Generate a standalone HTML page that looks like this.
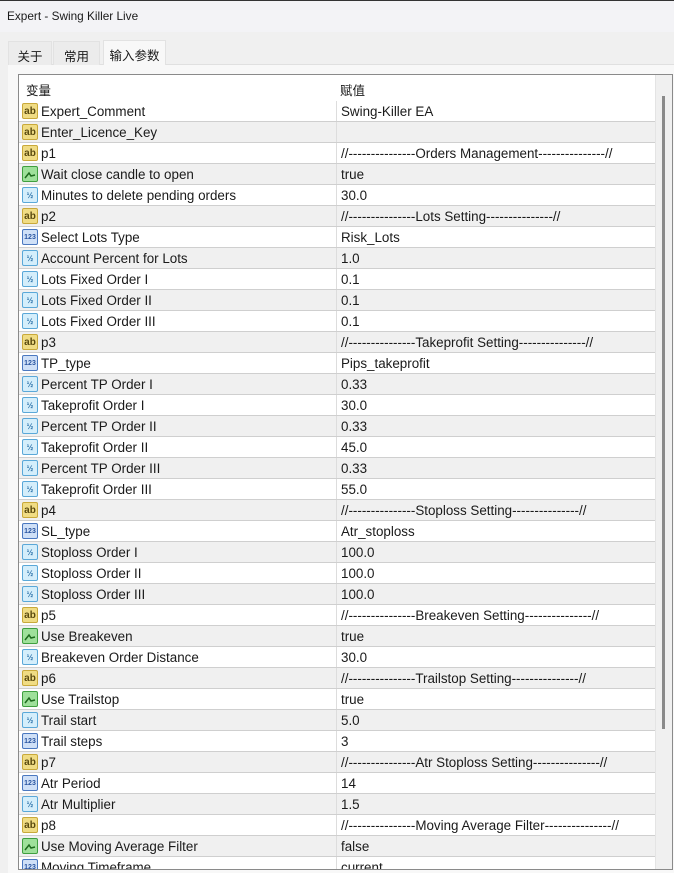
<!DOCTYPE html>
<html><head><meta charset="utf-8"><style>
*{margin:0;padding:0;box-sizing:border-box}
body{width:674px;height:873px;overflow:hidden;background:#f0f0f0;font-family:"Liberation Sans","Noto Sans CJK SC",sans-serif;font-size:13.4px;color:#1a1a1a;position:relative}
.title{position:absolute;left:0;top:0;width:674px;height:32px;background:#f3f3f6;border-top:1px solid #333}
.title span{position:absolute;left:7px;top:8px;font-size:11.8px}
.tab{position:absolute;top:41px;height:24px;padding-top:4px;text-align:center;font-size:12.5px;background:#ececec;border:1px solid #e2e2e2;border-bottom:none}
.panel{position:absolute;left:8px;top:64px;width:666px;height:809px;background:#f8f8f8;border-top:1px solid #e0e0e0}
.grid{position:absolute;left:18px;top:74px;width:655px;height:796px;background:#fff;border:1px solid #8a8a8a;overflow:hidden}
.hdr{position:absolute;left:0;top:0;height:24px;width:636px;font-size:12.5px}
.hdr span{position:absolute;top:5px}
.row{position:absolute;left:0;width:636px;height:21px;border-bottom:1px solid #cfcfcf;margin-top:1px}
.row.s{background:#f0f0f0}
.n{position:absolute;left:22px;top:3px;white-space:nowrap}
.v{position:absolute;left:317px;padding-left:4px;top:0;padding-top:3px;height:20px;white-space:nowrap;border-left:1px solid #ddd}
.ic{position:absolute;left:3px;top:2px;width:16px;height:16px;border-radius:2px;font-size:8px;font-weight:bold;text-align:center;line-height:15px;font-family:"Liberation Sans",sans-serif}
.ab{background:#f0dc84;border:1px solid #c9a93a;color:#5a4a10;font-size:10px}
.n123{background:#cfe0f7;border:1px solid #4a78c0;color:#2a55a0;font-size:7px}
.hf{background:#d4eefb;border:1px solid #5aa8d8;color:#2a70a8;font-size:8px}
.bl{background:#9ee09a;border:1px solid #3f9f3f}
.sb{position:absolute;left:636px;top:0;width:18px;height:796px;background:#f0f0f0;border-left:1px solid #e4e4e4}
.th{position:absolute;left:6px;top:21px;width:3px;height:633px;background:#8a8a8a}
</style></head><body>
<div class="title"><span>Expert - Swing Killer Live</span></div>
<div class="panel"></div>
<div class="tab" style="left:8px;width:44px">关于</div>
<div class="tab" style="left:53px;width:47px">常用</div>
<div class="tab" style="left:103px;width:63px;background:#f8f8f8;height:25px;top:40px">输入参数</div>
<div class="grid">
<div class="hdr"><span style="left:7px">变量</span><span style="left:321px">赋值</span></div>
<div id="rows">
<div class="row" style="top:25px"><div class="ic ab">ab</div><span class="n">Expert_Comment</span><span class="v">Swing-Killer EA</span></div>
<div class="row s" style="top:46px"><div class="ic ab">ab</div><span class="n">Enter_Licence_Key</span><span class="v"></span></div>
<div class="row" style="top:67px"><div class="ic ab">ab</div><span class="n">p1</span><span class="v">//---------------Orders Management---------------//</span></div>
<div class="row s" style="top:88px"><div class="ic bl"><svg width="14" height="14"><path d="M2 11 L6 6 L8 9 L12 8" stroke="#1d6a1d" stroke-width="1.5" fill="none"/></svg></div><span class="n">Wait close candle to open</span><span class="v">true</span></div>
<div class="row" style="top:109px"><div class="ic hf">½</div><span class="n">Minutes to delete pending orders</span><span class="v">30.0</span></div>
<div class="row s" style="top:130px"><div class="ic ab">ab</div><span class="n">p2</span><span class="v">//---------------Lots Setting---------------//</span></div>
<div class="row" style="top:151px"><div class="ic n123">123</div><span class="n">Select Lots Type</span><span class="v">Risk_Lots</span></div>
<div class="row s" style="top:172px"><div class="ic hf">½</div><span class="n">Account Percent for Lots</span><span class="v">1.0</span></div>
<div class="row" style="top:193px"><div class="ic hf">½</div><span class="n">Lots Fixed Order I</span><span class="v">0.1</span></div>
<div class="row s" style="top:214px"><div class="ic hf">½</div><span class="n">Lots Fixed Order II</span><span class="v">0.1</span></div>
<div class="row" style="top:235px"><div class="ic hf">½</div><span class="n">Lots Fixed Order III</span><span class="v">0.1</span></div>
<div class="row s" style="top:256px"><div class="ic ab">ab</div><span class="n">p3</span><span class="v">//---------------Takeprofit Setting---------------//</span></div>
<div class="row" style="top:277px"><div class="ic n123">123</div><span class="n">TP_type</span><span class="v">Pips_takeprofit</span></div>
<div class="row s" style="top:298px"><div class="ic hf">½</div><span class="n">Percent TP Order I</span><span class="v">0.33</span></div>
<div class="row" style="top:319px"><div class="ic hf">½</div><span class="n">Takeprofit Order I</span><span class="v">30.0</span></div>
<div class="row s" style="top:340px"><div class="ic hf">½</div><span class="n">Percent TP Order II</span><span class="v">0.33</span></div>
<div class="row" style="top:361px"><div class="ic hf">½</div><span class="n">Takeprofit Order II</span><span class="v">45.0</span></div>
<div class="row s" style="top:382px"><div class="ic hf">½</div><span class="n">Percent TP Order III</span><span class="v">0.33</span></div>
<div class="row" style="top:403px"><div class="ic hf">½</div><span class="n">Takeprofit Order III</span><span class="v">55.0</span></div>
<div class="row s" style="top:424px"><div class="ic ab">ab</div><span class="n">p4</span><span class="v">//---------------Stoploss Setting---------------//</span></div>
<div class="row" style="top:445px"><div class="ic n123">123</div><span class="n">SL_type</span><span class="v">Atr_stoploss</span></div>
<div class="row s" style="top:466px"><div class="ic hf">½</div><span class="n">Stoploss Order I</span><span class="v">100.0</span></div>
<div class="row" style="top:487px"><div class="ic hf">½</div><span class="n">Stoploss Order II</span><span class="v">100.0</span></div>
<div class="row s" style="top:508px"><div class="ic hf">½</div><span class="n">Stoploss Order III</span><span class="v">100.0</span></div>
<div class="row" style="top:529px"><div class="ic ab">ab</div><span class="n">p5</span><span class="v">//---------------Breakeven Setting---------------//</span></div>
<div class="row s" style="top:550px"><div class="ic bl"><svg width="14" height="14"><path d="M2 11 L6 6 L8 9 L12 8" stroke="#1d6a1d" stroke-width="1.5" fill="none"/></svg></div><span class="n">Use Breakeven</span><span class="v">true</span></div>
<div class="row" style="top:571px"><div class="ic hf">½</div><span class="n">Breakeven Order Distance</span><span class="v">30.0</span></div>
<div class="row s" style="top:592px"><div class="ic ab">ab</div><span class="n">p6</span><span class="v">//---------------Trailstop Setting---------------//</span></div>
<div class="row" style="top:613px"><div class="ic bl"><svg width="14" height="14"><path d="M2 11 L6 6 L8 9 L12 8" stroke="#1d6a1d" stroke-width="1.5" fill="none"/></svg></div><span class="n">Use Trailstop</span><span class="v">true</span></div>
<div class="row s" style="top:634px"><div class="ic hf">½</div><span class="n">Trail start</span><span class="v">5.0</span></div>
<div class="row" style="top:655px"><div class="ic n123">123</div><span class="n">Trail steps</span><span class="v">3</span></div>
<div class="row s" style="top:676px"><div class="ic ab">ab</div><span class="n">p7</span><span class="v">//---------------Atr Stoploss Setting---------------//</span></div>
<div class="row" style="top:697px"><div class="ic n123">123</div><span class="n">Atr Period</span><span class="v">14</span></div>
<div class="row s" style="top:718px"><div class="ic hf">½</div><span class="n">Atr Multiplier</span><span class="v">1.5</span></div>
<div class="row" style="top:739px"><div class="ic ab">ab</div><span class="n">p8</span><span class="v">//---------------Moving Average Filter---------------//</span></div>
<div class="row s" style="top:760px"><div class="ic bl"><svg width="14" height="14"><path d="M2 11 L6 6 L8 9 L12 8" stroke="#1d6a1d" stroke-width="1.5" fill="none"/></svg></div><span class="n">Use Moving Average Filter</span><span class="v">false</span></div>
<div class="row" style="top:781px"><div class="ic n123">123</div><span class="n">Moving Timeframe</span><span class="v">current</span></div>
</div>
<div class="sb"><div class="th"></div></div>
</div>
</body></html>
